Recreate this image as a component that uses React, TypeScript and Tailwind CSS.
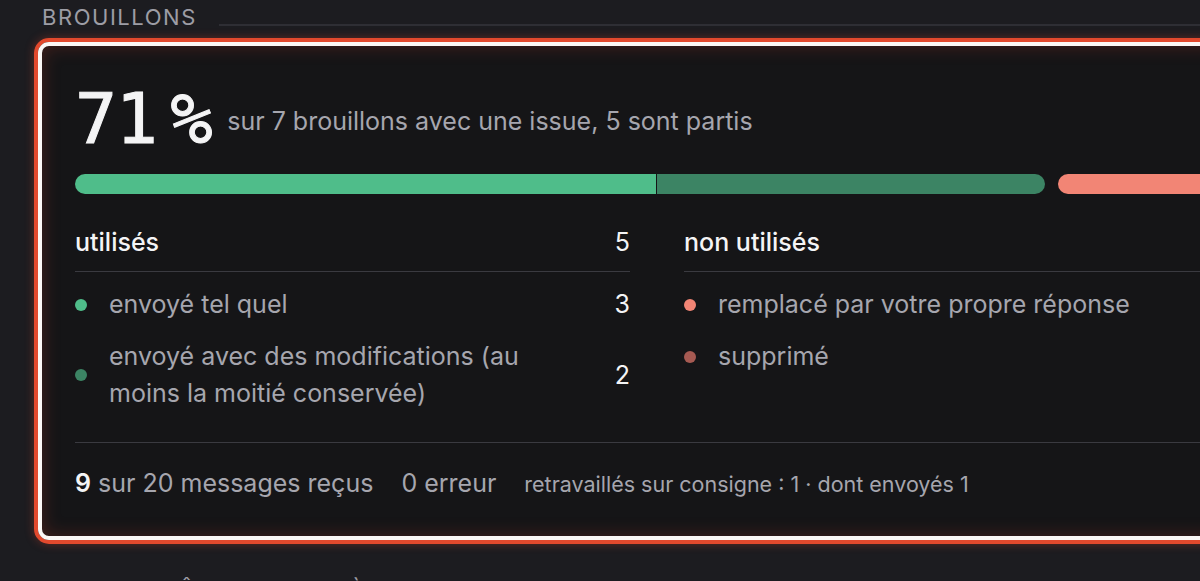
const GRAY = "text-[#a6a6ae]";

type Row = { dot: string; label: string; count?: number };

const used: Row[] = [
  { dot: "bg-[#4fbd8a]", label: "envoyé tel quel", count: 3 },
  { dot: "bg-[#3c8464]", label: "envoyé avec des modifications (au moins la moitié conservée)", count: 2 },
];

const unused: Row[] = [
  { dot: "bg-[#f28575]", label: "remplacé par votre propre réponse" },
  { dot: "bg-[#a65a52]", label: "supprimé" },
];

function SectionTitle({ title }: { title: string }) {
  return (
    <div className="flex items-end pl-[8px]">
      <div className="text-[22px] leading-[24px] tracking-[0.07em] text-[#9d9da5]">{title}</div>
      <div className="ml-[22px] mb-[3px] h-[2px] flex-1 bg-[#2e2e34]" />
    </div>
  );
}

function Group({ title, total, rows, width }: { title: string; total?: number; rows: Row[]; width: string }) {
  return (
    <div className={width}>
      <div className="flex justify-between border-b border-[#3a3a40] pb-[13px] text-[25px] leading-[32px] font-medium text-[#f4f4f5]">
        <span>{title}</span>
        {total !== undefined && <span className="font-normal">{total}</span>}
      </div>
      <div className="flex flex-col gap-[15px] pt-[14px]">
        {rows.map((r) => (
          <div key={r.label} className="flex items-center text-[25px] leading-[37px]">
            <span className={`h-[12px] w-[12px] shrink-0 rounded-full ${r.dot}`} />
            <span className={`ml-[22px] flex-1 ${GRAY}`}>{r.label}</span>
            {r.count !== undefined && <span className="pl-[40px] text-[#f4f4f5]">{r.count}</span>}
          </div>
        ))}
      </div>
    </div>
  );
}

export default function App() {
  return (
    <div className="h-[581px] w-full overflow-hidden bg-[#1c1c20] font-['Inter',sans-serif]">
      <div className="pl-[34px] pt-[5px]">
        <SectionTitle title="BROUILLONS" />

        <div className="mt-[9px] w-[1460px] rounded-[15px] border-4 border-[#e2492d] shadow-[0_0_10px_rgba(226,73,45,0.35)]">
          <div className="rounded-[11px] border-4 border-[#fbf7f5] bg-[#151517] px-[33px] pt-[38px] pb-[36px] shadow-[inset_0_0_18px_rgba(200,60,40,0.28)]">
            <div className="flex items-end gap-[16px]">
              <div className="flex font-['DejaVu_Sans_Mono',monospace] text-[70px] leading-none font-normal tracking-[-0.02em] text-[#f4f4f5] [-webkit-text-stroke:1px_#f4f4f5]">
                <span>71</span>
                <span className="ml-[14px]">%</span>
              </div>
              <div className={`mb-[17px] text-[25px] leading-[32px] ${GRAY}`}>
                sur 7 brouillons avec une issue, 5 sont partis
              </div>
            </div>

            <div className="mt-[20px] flex h-[20px]">
              <div className="flex w-[970px] gap-px">
                <div className="w-[581px] rounded-l-full bg-[#4fbd8a]" />
                <div className="flex-1 rounded-r-full bg-[#3c8464]" />
              </div>
              <div className="ml-[13px] w-[388px] rounded-full bg-[#f28575]" />
            </div>

            <div className="mt-[32px] flex gap-[54px]">
              <Group title="utilisés" total={5} rows={used} width="w-[555px]" />
              <Group title="non utilisés" rows={unused} width="flex-1" />
            </div>

            <div className="mt-[30px] flex items-baseline gap-[28px] border-t border-[#3a3a40] pt-[24px] leading-[32px]">
              <div className={`text-[25px] ${GRAY}`}>
                <span className="font-semibold text-[#f4f4f5]">9</span> sur 20 messages reçus
              </div>
              <div className={`text-[25px] ${GRAY}`}>0 erreur</div>
              <div className={`text-[21.5px] ${GRAY}`}>retravaillés sur consigne : 1 · dont envoyés 1</div>
            </div>
          </div>
        </div>

        <div className="mt-[34px]">
          <SectionTitle title="ENVOI, FENÊTRE ET SYSTÈME" />
        </div>
      </div>
    </div>
  );
}
